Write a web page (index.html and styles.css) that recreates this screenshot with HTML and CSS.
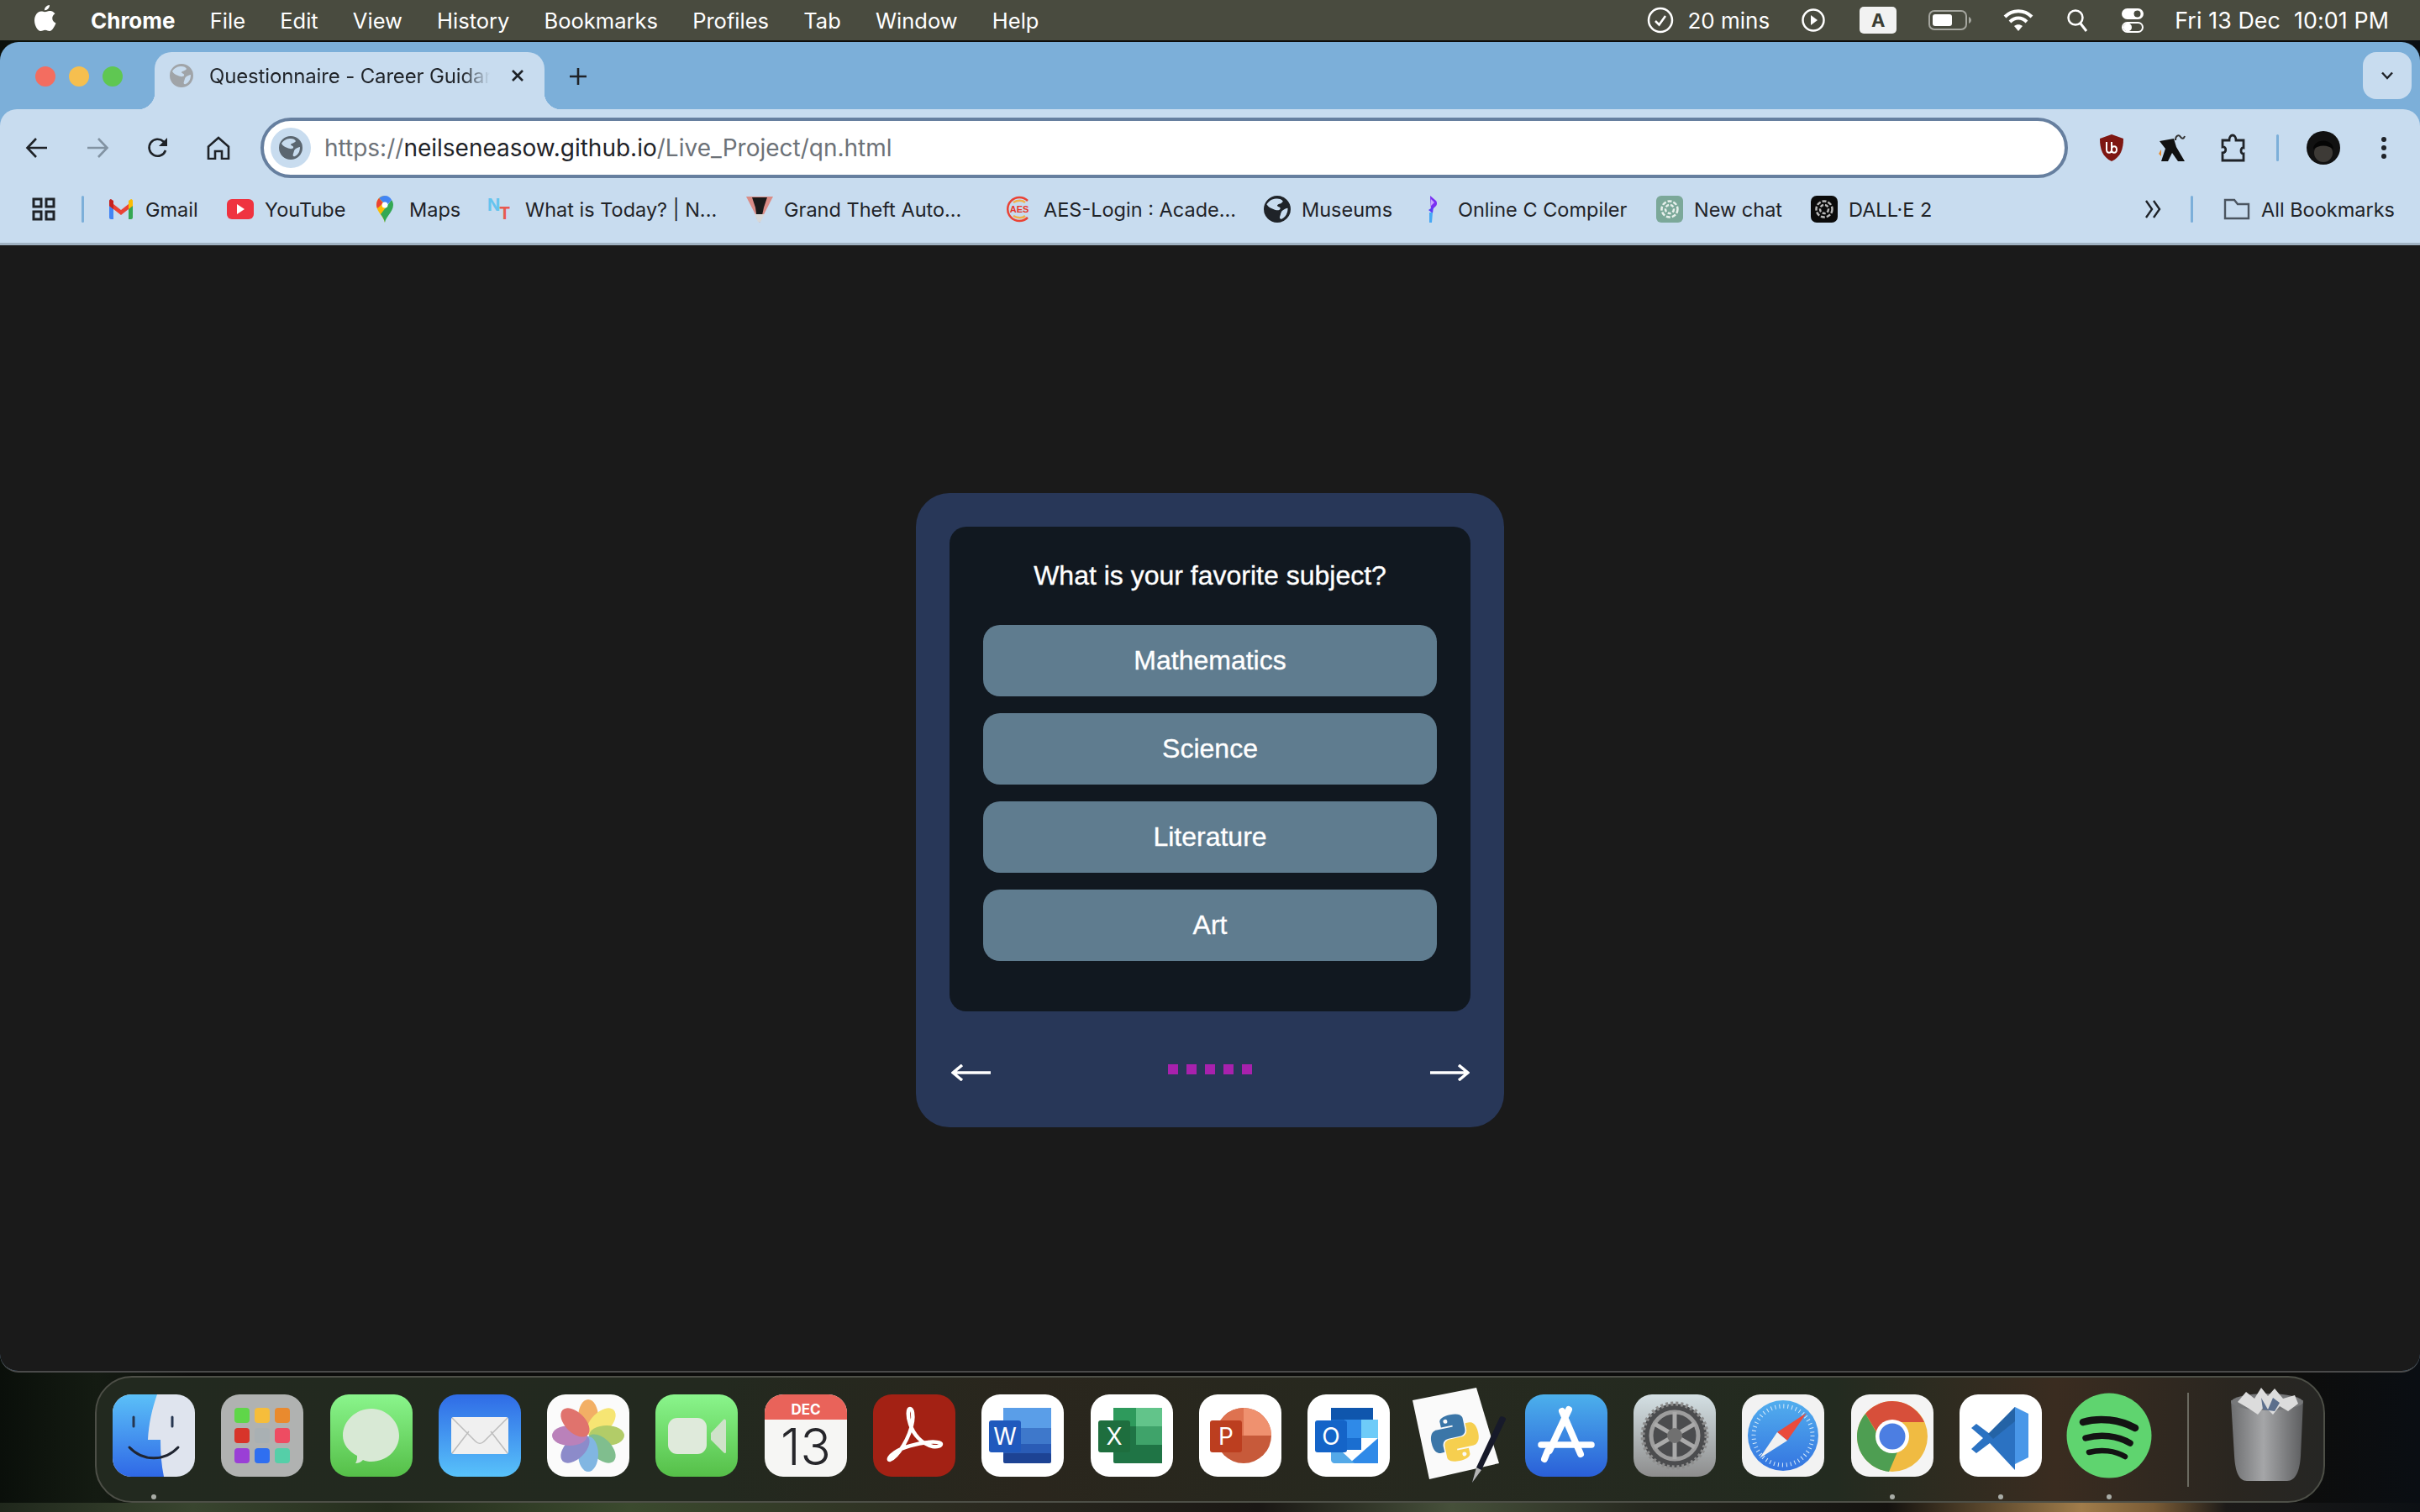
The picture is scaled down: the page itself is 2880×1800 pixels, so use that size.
FILE: index.html
```html
<!DOCTYPE html>
<html lang="en">
<head>
<meta charset="utf-8">
<title>Questionnaire - Career Guidance</title>
<link rel="stylesheet" href="styles.css">
</head>
<body>
<svg class="defs" width="0" height="0">
  <defs>
    <symbol id="globe" viewBox="0 0 28 28"><path fill-rule="evenodd" d="M14 0a14 14 0 1 0 0 28a14 14 0 1 0 0-28zM3 9C6 4 10 3 14 3c3 0 5 1 6 3-2 3-5 2-6 4 0 2 4 1 3 4-1 2-5 1-7 0-3-1-5-2-7-5zM25 13c0 5-2 9-6 11-2 1-3-1-2-3 1-3 1-5 3-6 2-1 3-2 5-2z"/></symbol>
    <linearGradient id="gFinder" x1="0" y1="0" x2="0" y2="1"><stop offset="0" stop-color="#5bc0f8"/><stop offset="1" stop-color="#2f68e6"/></linearGradient>
    <linearGradient id="gMsg" x1="0" y1="0" x2="0" y2="1"><stop offset="0" stop-color="#8af58c"/><stop offset="1" stop-color="#55bf48"/></linearGradient>
    <linearGradient id="gMail" x1="0" y1="0" x2="0" y2="1"><stop offset="0" stop-color="#2f6be6"/><stop offset="1" stop-color="#58c2fa"/></linearGradient>
    <linearGradient id="gStore" x1="0" y1="0" x2="0" y2="1"><stop offset="0" stop-color="#4cb0ec"/><stop offset="1" stop-color="#2a5fd8"/></linearGradient>
    <linearGradient id="gGear" x1="0" y1="0" x2="0" y2="1"><stop offset="0" stop-color="#d4e0e4"/><stop offset="1" stop-color="#8d8d8d"/></linearGradient>
    <linearGradient id="gSaf" x1="0" y1="0" x2="0" y2="1"><stop offset="0" stop-color="#52aeee"/><stop offset="1" stop-color="#3474e0"/></linearGradient>
    <linearGradient id="gTrash" x1="0" y1="0" x2="1" y2="0"><stop offset="0" stop-color="#6d6e70"/><stop offset=".45" stop-color="#a5a6a8"/><stop offset="1" stop-color="#5d5e60"/></linearGradient>
    <clipPath id="cIcon"><rect width="98" height="98" rx="22"/></clipPath>
  </defs>
</svg>

<header class="menubar">
  <div class="menu-left">
    <svg class="apple" viewBox="0 0 26 32"><path fill="#fff" d="M18 0c.3 3-2.700 6.500-6 6.200C11.600 3 15 .2 18 0zM12.300 8.200c1.500 0 3.200-1.300 5.700-1.300 1.500 0 4.700.5 6.500 3.400-4.800 3-4 9.300 1 11.300-1.300 3.600-4.300 9.400-7.500 9.400-2 0-2.800-1.300-5.200-1.300-2.500 0-3.400 1.300-5.300 1.300C3.500 31 0 24 0 18.500 0 12 4 7.500 8 7.500c1.800 0 3.200.7 4.300.7z"/></svg>
    <span class="menu-item menu-app">Chrome</span>
    <span class="menu-item">File</span>
    <span class="menu-item">Edit</span>
    <span class="menu-item">View</span>
    <span class="menu-item">History</span>
    <span class="menu-item">Bookmarks</span>
    <span class="menu-item">Profiles</span>
    <span class="menu-item">Tab</span>
    <span class="menu-item">Window</span>
    <span class="menu-item">Help</span>
  </div>
  <div class="menu-right">
    <svg class="st st-clock" viewBox="0 0 32 32"><circle cx="16" cy="16" r="14" fill="none" stroke="#fff" stroke-width="2.500"/><path d="M10 17l4.500 4.500L22 11" fill="none" stroke="#fff" stroke-width="2.500"/></svg>
    <span class="st-text st-mins">20 mins</span>
    <svg class="st st-play" viewBox="0 0 28 32"><circle cx="14" cy="16" r="12.500" fill="none" stroke="#fff" stroke-width="2.500"/><path d="M11 10l8 6-8 6z" fill="#fff"/></svg>
    <span class="st-a">A</span>
    <svg class="st st-batt" viewBox="0 0 52 28"><rect x="1" y="3" width="44" height="22" rx="6" fill="none" stroke="#a5a69f" stroke-width="2"/><rect x="5" y="7" width="23" height="14" rx="3" fill="#fff"/><path d="M48 10c2 1 3 2.500 3 4s-1 3-3 4z" fill="#a5a69f"/></svg>
    <svg class="st st-wifi" viewBox="0 0 36 28"><path d="M2 10C11 1 25 1 34 10" fill="none" stroke="#fff" stroke-width="4"/><path d="M8 16c6-6 14-6 20 0" fill="none" stroke="#fff" stroke-width="4"/><path d="M18 27l-5-6c3-2.500 7-2.500 10 0z" fill="#fff"/></svg>
    <svg class="st st-search" viewBox="0 0 26 30"><circle cx="11" cy="12" r="8.500" fill="none" stroke="#fff" stroke-width="2.500"/><path d="M17 19l7 9" stroke="#fff" stroke-width="3"/></svg>
    <svg class="st st-ctrl" viewBox="0 0 28 30"><rect x="1" y="1" width="26" height="13" rx="6.500" fill="#fff"/><circle cx="19.500" cy="7.500" r="4" fill="#494b3f"/><rect x="1" y="17" width="26" height="13" rx="6.500" fill="#fff"/><rect x="3" y="19" width="22" height="9" rx="4.500" fill="#494b3f"/><circle cx="8" cy="23.500" r="5" fill="#fff"/></svg>
    <span class="st-text st-date">Fri 13 Dec</span>
    <span class="st-text st-time">10:01 PM</span>
  </div>
</header>

<main class="window">
  <div class="tabstrip">
    <div class="lights">
      <span class="light light-red"></span>
      <span class="light light-yellow"></span>
      <span class="light light-green"></span>
    </div>
    <div class="tab">
      <svg class="tab-fav"><use href="#globe"/></svg>
      <span class="tab-title">Questionnaire - Career Guidance</span>
      <svg class="tab-close" viewBox="0 0 16 16"><path d="M2 2l12 12M14 2L2 14" stroke="#1f2328" stroke-width="2.600"/></svg>
    </div>
    <svg class="tab-new" viewBox="0 0 22 22"><path d="M11 1v20M1 11h20" stroke="#1f2328" stroke-width="2.600"/></svg>
    <div class="tab-search"><svg viewBox="0 0 16 10"><path d="M2 1.500l6 6.500 6-6.500" fill="none" stroke="#1f2328" stroke-width="2.400"/></svg></div>
  </div>

  <div class="toolbar">
    <svg class="tool" viewBox="0 0 28 28"><path d="M26 14H3M13 3L2.500 14 13 25" fill="none" stroke="#1f2328" stroke-width="2.600"/></svg>
    <svg class="tool" viewBox="0 0 28 28"><path d="M2 14h23M15 3l10.500 11L15 25" fill="none" stroke="#8293a3" stroke-width="2.600"/></svg>
    <svg class="tool" viewBox="0 0 28 28"><path d="M23 17a10 10 0 1 1-2.500-10.500L24 10" fill="none" stroke="#1f2328" stroke-width="2.600"/><path d="M25 2v10H15z" fill="#1f2328"/></svg>
    <svg class="tool" viewBox="0 0 28 28"><path d="M14 2L2 12.500V27h8v-9h8v9h8V12.500z" fill="none" stroke="#1f2328" stroke-width="2.600"/></svg>
    <div class="omnibox">
      <span class="omni-chip"><svg class="omni-globe"><use href="#globe"/></svg></span>
      <span class="url"><span class="url-dim">https://</span>neilseneasow.github.io<span class="url-dim">/Live_Project/qn.html</span></span>
    </div>
    <svg class="ext ext-ub" viewBox="0 0 30 34"><path d="M15 1l14 5c0 12-3 22-14 27C4 28 1 18 1 6z" fill="#7e1712"/><path d="M9 10v9c0 5 6 5 6 0v-9M15 19c0 5 6 5 6 0s-6-5-6 0" fill="none" stroke="#fff" stroke-width="2"/></svg>
    <svg class="ext ext-bag" viewBox="0 0 36 36"><path d="M3 10l17-3 3 10 10 17h-8l-7-10-5 10H5l5-15z" fill="#111"/><path d="M5 20L2 25l3 3z" fill="#e88b2d"/><path d="M22 9c0-6 4-7 6-4s4 2 5-1" fill="none" stroke="#333" stroke-width="2"/></svg>
    <svg class="ext ext-puzzle" viewBox="0 0 32 34"><path d="M3 8h8c0-8 8-8 8 0h9v9c-4-1-4 8 0 7v8H3v-9c5 0 5-8 0-7z" fill="none" stroke="#1f2328" stroke-width="2.800"/></svg>
    <span class="tool-div"></span>
    <svg class="avatar" viewBox="0 0 40 40"><circle cx="20" cy="20" r="20" fill="#111"/><circle cx="20" cy="26" r="11" fill="#3d3a36"/><path d="M8 22c0-14 24-14 24 0-6-6-18-6-24 0z" fill="#050505"/></svg>
    <svg class="kebab" viewBox="0 0 8 28"><circle cx="4" cy="4" r="3"/><circle cx="4" cy="14" r="3"/><circle cx="4" cy="24" r="3"/></svg>
  </div>

  <nav class="bookmarks">
    <svg class="bm-apps" viewBox="0 0 28 28"><path d="M2 2h9v9H2zM17 2h9v9h-9zM2 17h9v9H2zM17 17h9v9h-9z" fill="none" stroke="#1f2328" stroke-width="3"/></svg>
    <span class="bm-div"></span>
    <a class="bm bm-gmail">
      <svg class="fav" viewBox="0 0 32 32"><path d="M2 6h5v22H4c-1 0-2-1-2-2z" fill="#4285f4"/><path d="M25 6h5v20c0 1-1 2-2 2h-3z" fill="#34a853"/><path d="M2 6l14 11L30 6v6L16 23 2 12z" fill="#ea4335"/><path d="M25 6l3-2c1 0 2 1 2 2v6l-5 4z" fill="#fbbc04"/><path d="M2 6c0-1 1-2 2-2l3 2v10l-5-4z" fill="#c5221f"/></svg>
      <span>Gmail</span>
    </a>
    <a class="bm bm-yt">
      <svg class="fav" viewBox="0 0 32 32"><rect y="4" width="32" height="24" rx="6" fill="#ef3340"/><path d="M12 10l9 6-9 6z" fill="#fff"/></svg>
      <span>YouTube</span>
    </a>
    <a class="bm bm-maps">
      <svg class="fav" viewBox="0 0 32 32"><path d="M16 32c-1-7-10-13-10-21a10 10 0 0 1 10-11v10z" fill="#fbbc04"/><path d="M16 32c1-7 10-13 10-21 0-2-.5-4-2-6L11 22c3 4 4.500 7 5 10z" fill="#34a853"/><path d="M9 3c2-2 4.500-3 7-3 4 0 6.500 2 8 5l-6 7z" fill="#4285f4"/><path d="M6 11c0-3 1-6 3-8l5 6-7 6c-.500-1-1-3-1-4z" fill="#ea4335"/><circle cx="16" cy="11" r="3.500" fill="#fff"/></svg>
      <span>Maps</span>
    </a>
    <a class="bm bm-nt">
      <svg class="fav" viewBox="0 0 32 32"><text x="0" y="18" class="nt-n">N</text><text x="14" y="28" class="nt-t">T</text></svg>
      <span>What is Today? | N...</span>
    </a>
    <a class="bm bm-gta">
      <svg class="fav" viewBox="0 0 32 32"><path d="M0 1h32L16 32z" fill="#d98c86"/><path d="M7 2h18l-4 12-3 14h-5l-2-14z" fill="#1a1a1a"/><path d="M10 22h12l-5 9h-3z" fill="#d8d8d8"/></svg>
      <span>Grand Theft Auto...</span>
    </a>
    <a class="bm bm-aes">
      <svg class="fav" viewBox="0 0 32 32"><path d="M26 6A14 14 0 1 0 26 26" fill="none" stroke="#ea4335" stroke-width="2.500"/><path d="M9 8c5-3 11-3 14 0M9 24c5 3 11 3 14 0" fill="none" stroke="#f2b04b" stroke-width="2.500"/><text x="16" y="20" class="aes-t">AES</text></svg>
      <span>AES-Login : Acade...</span>
    </a>
    <a class="bm bm-mus">
      <svg class="fav fav-globe"><use href="#globe"/></svg>
      <span>Museums</span>
    </a>
    <a class="bm bm-c">
      <svg class="fav" viewBox="0 0 32 32"><path d="M12 0l7 6c2 3 1 6-2 8l-4 4z" fill="#7a2ff2"/><path d="M13 4l4 4-4 4z" fill="#c9a5ff"/><path d="M10 17l6-4-1 8z" fill="#5b3df5"/><path d="M11 20h4l-1 12h-3z" fill="#46a8f5"/></svg>
      <span>Online C Compiler</span>
    </a>
    <a class="bm bm-chat">
      <svg class="fav" viewBox="0 0 32 32"><rect width="32" height="32" rx="6" fill="#7ba899"/><circle cx="16" cy="16" r="9.500" fill="none" stroke="#e8f0ec" stroke-width="2.500" stroke-dasharray="5 2"/><circle cx="16" cy="16" r="5" fill="none" stroke="#e8f0ec" stroke-width="2.500" stroke-dasharray="4 2"/></svg>
      <span>New chat</span>
    </a>
    <a class="bm bm-dalle">
      <svg class="fav" viewBox="0 0 32 32"><rect width="32" height="32" rx="7" fill="#0b0b0b"/><circle cx="16" cy="16" r="9.500" fill="none" stroke="#b8b8b8" stroke-width="2.500" stroke-dasharray="5 2"/><circle cx="16" cy="16" r="5" fill="none" stroke="#b8b8b8" stroke-width="2.500" stroke-dasharray="4 2"/></svg>
      <span>DALL·E 2</span>
    </a>
    <svg class="bm-more" viewBox="0 0 22 24"><path d="M3 2l7 10-7 10M12 2l7 10-7 10" fill="none" stroke="#1f2328" stroke-width="2.400"/></svg>
    <span class="bm-div bm-div-right"></span>
    <a class="bm bm-all">
      <svg class="fav" viewBox="0 0 32 32"><path d="M2 5h11l4 5h13v17H2z" fill="none" stroke="#4b5560" stroke-width="2.400"/></svg>
      <span>All Bookmarks</span>
    </a>
  </nav>

  <section class="page">
    <div class="card">
      <div class="panel">
        <h2 class="question">What is your favorite subject?</h2>
        <button class="answer">Mathematics</button>
        <button class="answer">Science</button>
        <button class="answer">Literature</button>
        <button class="answer">Art</button>
      </div>
      <div class="card-nav">
        <svg class="nav-arrow" viewBox="0 0 48 20"><path d="M47 10H3M13 1L2 10l11 9" fill="none" stroke="#fff" stroke-width="3.500"/></svg>
        <div class="steps"><span class="step"></span><span class="step"></span><span class="step"></span><span class="step"></span><span class="step"></span></div>
        <svg class="nav-arrow" viewBox="0 0 48 20"><path d="M1 10h44M35 1l11 9-11 9" fill="none" stroke="#fff" stroke-width="3.500"/></svg>
      </div>
    </div>
  </section>
</main>

<footer class="dock">
  <div class="dock-item running">
    <svg viewBox="0 0 98 98"><g clip-path="url(#cIcon)"><rect width="98" height="98" fill="#dfe4ee"/><path d="M0 0h53c-6 17-10 35-11 54h15c0 15 1 30 4 44H0z" fill="url(#gFinder)"/><path d="M25 27v11M71 27v11" stroke="#263650" stroke-width="3" stroke-linecap="round"/><path d="M20 63c16 17 42 17 58 0" fill="none" stroke="#1f2430" stroke-width="3" stroke-linecap="round"/></g></svg>
  </div>
  <div class="dock-item">
    <svg viewBox="0 0 98 98"><rect width="98" height="98" rx="22" fill="#b0b2b1"/>
      <rect x="16" y="16" width="18" height="18" rx="4" fill="#5fd649"/><rect x="40" y="16" width="18" height="18" rx="4" fill="#f6bd3b"/><rect x="64" y="16" width="18" height="18" rx="4" fill="#e98a2e"/>
      <rect x="16" y="40" width="18" height="18" rx="4" fill="#d8342a"/><rect x="40" y="40" width="18" height="18" rx="4" fill="#a9b0b3"/><rect x="64" y="40" width="18" height="18" rx="4" fill="#ee4c62"/>
      <rect x="16" y="64" width="18" height="18" rx="4" fill="#9a3fd6"/><rect x="40" y="64" width="18" height="18" rx="4" fill="#2f6ff0"/><rect x="64" y="64" width="18" height="18" rx="4" fill="#55cfa8"/>
    </svg>
  </div>
  <div class="dock-item"><svg viewBox="0 0 98 98"><rect width="98" height="98" rx="22" fill="url(#gMsg)"/><path d="M49 17c18 0 33 15 33 32S67 80 49 80c-4 0-7-.500-10-2-3 3-6 4-9 4 2-3 2-6 2-9-10-5-17-14-17-24 0-17 15-32 34-32z" fill="#d8e9d5"/></svg></div>
  <div class="dock-item"><svg viewBox="0 0 98 98"><rect width="98" height="98" rx="22" fill="url(#gMail)"/><rect x="15" y="27" width="68" height="44" rx="3" fill="#f0f0f0"/><path d="M16 28l28 28c3 3 7 3 10 0l28-28M16 70l20-26M82 70L62 44" fill="none" stroke="#bdbdbd" stroke-width="1.500"/></svg></div>
  <div class="dock-item"><svg viewBox="0 0 98 98"><rect width="98" height="98" rx="22" fill="#fbfbfb"/><g opacity=".78"><ellipse cx="49" cy="27" rx="12" ry="21" fill="#f09a3c"/><ellipse cx="49" cy="27" rx="12" ry="21" fill="#f5df4d" transform="rotate(45 49 49)"/><ellipse cx="49" cy="27" rx="12" ry="21" fill="#9ebf3f" transform="rotate(90 49 49)"/><ellipse cx="49" cy="27" rx="12" ry="21" fill="#5eae70" transform="rotate(135 49 49)"/><ellipse cx="49" cy="27" rx="12" ry="21" fill="#5fa3dc" transform="rotate(180 49 49)"/><ellipse cx="49" cy="27" rx="12" ry="21" fill="#6e6cbd" transform="rotate(225 49 49)"/><ellipse cx="49" cy="27" rx="12" ry="21" fill="#a860a8" transform="rotate(270 49 49)"/><ellipse cx="49" cy="27" rx="12" ry="21" fill="#d94d46" transform="rotate(315 49 49)"/></g></svg></div>
  <div class="dock-item"><svg viewBox="0 0 98 98"><rect width="98" height="98" rx="22" fill="url(#gMsg)"/><rect x="15" y="28" width="46" height="43" rx="11" fill="#dfeadb"/><path d="M66 46l15-16c2-1 3 0 3 2v36c0 2-1 3-3 1L66 54z" fill="#cfe2c9"/></svg></div>
  <div class="dock-item"><svg viewBox="0 0 98 98"><g clip-path="url(#cIcon)"><rect width="98" height="98" fill="#f6f6f4"/><rect width="98" height="30" fill="#e9635a"/><text x="49" y="24" class="cal-m">DEC</text><text x="49" y="84" class="cal-d">13</text></g></svg></div>
  <div class="dock-item"><svg viewBox="0 0 98 98"><rect width="98" height="98" rx="22" fill="#a32114"/><path d="M20 78c10-4 24-27 27-46 1-7 0-15-3-15s-3 9 0 18c4 13 14 24 27 27 6 1 10-1 10-3s-8-3-16-2c-12 1-30 6-39 12-6 4-9 9-6 9z" fill="none" stroke="#fff" stroke-width="4.500"/></svg></div>
  <div class="dock-item"><svg viewBox="0 0 98 98"><rect width="98" height="98" rx="22" fill="#fff"/><rect x="26" y="16" width="57" height="24" fill="#5a9ee8"/><rect x="26" y="40" width="57" height="19" fill="#3e78cb"/><rect x="26" y="59" width="57" height="19" fill="#2a5cb6"/><rect x="26" y="70" width="57" height="12" rx="2" fill="#1d4394"/><rect x="9" y="31" width="38" height="38" rx="3" fill="#2059bd"/><text x="28" y="60" class="ms-l">W</text></svg></div>
  <div class="dock-item"><svg viewBox="0 0 98 98"><rect width="98" height="98" rx="22" fill="#fff"/><rect x="27" y="16" width="58" height="66" rx="2" fill="#1f7445"/><rect x="54" y="16" width="31" height="22" fill="#62c48a"/><rect x="54" y="38" width="31" height="22" fill="#3fa36a"/><rect x="54" y="60" width="31" height="22" fill="#1f7445"/><rect x="27" y="16" width="27" height="22" fill="#2e9a5c"/><rect x="9" y="31" width="38" height="38" rx="3" fill="#1e6e3e"/><text x="28" y="60" class="ms-l">X</text></svg></div>
  <div class="dock-item"><svg viewBox="0 0 98 98"><rect width="98" height="98" rx="22" fill="#fff"/><circle cx="53" cy="49" r="33" fill="#c75a3a"/><path d="M53 16a33 33 0 0 1 33 33H53z" fill="#ef916f"/><path d="M53 16a33 33 0 0 0-33 33h33z" fill="#de7250"/><rect x="13" y="31" width="38" height="38" rx="3" fill="#bc3e1f"/><text x="32" y="60" class="ms-l">P</text></svg></div>
  <div class="dock-item"><svg viewBox="0 0 98 98"><rect width="98" height="98" rx="22" fill="#fff"/><rect x="28" y="16" width="50" height="16" fill="#0f56ad"/><rect x="44" y="30" width="20" height="22" fill="#2f8ae8"/><rect x="64" y="30" width="20" height="22" fill="#6ecbf8"/><rect x="28" y="30" width="16" height="22" fill="#1a6ed0"/><rect x="44" y="52" width="20" height="14" fill="#1a6ed0"/><path d="M84 52L50 82h34z" fill="#2f8ae8"/><path d="M28 56l28 26H32c-2 0-4-2-4-4z" fill="#54a9e8"/><rect x="9" y="31" width="38" height="38" rx="3" fill="#1464c8"/><text x="28" y="60" class="ms-l">O</text></svg></div>
  <div class="dock-item"><svg viewBox="0 0 98 98">
    <path d="M-5 7L71-8 98 82 15 101z" fill="#fafafa"/>
    <g transform="translate(44 45) rotate(-12) scale(.52) translate(-55 -42)">
      <path fill="#3b76a8" fill-rule="evenodd" d="M54.900 1C27 1 28.700 13.100 28.700 13.100v12.500h26.600v3.800H18.100S.3 27.400.3 55.500s15.600 27.100 15.600 27.100h9.300V69.600s-.5-15.600 15.300-15.600h26.400s14.800.2 14.800-14.300V15.600S84 1 54.900 1zM40.300 9.400a4.800 4.800 0 1 1 0 9.500 4.800 4.800 0 0 1 0-9.500z"/>
      <path fill="#f6cf4f" fill-rule="evenodd" d="M55.100 109C83 109 81.300 96.900 81.300 96.900V84.400H54.700v-3.800h37.200s17.800 2 17.800-26.100-15.600-27.100-15.600-27.100h-9.300v13s.5 15.600-15.300 15.600H43.100s-14.800-.2-14.800 14.300v24.100S26 109 55.100 109zM69.700 100.600a4.800 4.800 0 1 1 0-9.500 4.800 4.800 0 0 1 0 9.500z"/>
    </g>
    <path d="M66 105l5-18 28-60c1-2 8 0 7 3L77 90z" fill="#171a2a"/><path d="M66 105l5-18 6 3z" fill="#b5b5b5"/>
  </svg></div>
  <div class="dock-item"><svg viewBox="0 0 98 98"><rect width="98" height="98" rx="22" fill="url(#gStore)"/><path d="M29 67L52 18M66 71L44 20" stroke="#fff" stroke-width="8" stroke-linecap="round"/><path d="M19 60h60" stroke="#fff" stroke-width="7.500" stroke-linecap="round"/><path d="M23 77l4-10" stroke="#fff" stroke-width="8" stroke-linecap="round"/></svg></div>
  <div class="dock-item"><svg viewBox="0 0 98 98"><rect width="98" height="98" rx="22" fill="url(#gGear)"/><circle cx="49" cy="49" r="38" fill="#4b4c4e"/><circle cx="49" cy="49" r="38" fill="none" stroke="#8c8c8c" stroke-width="5" stroke-dasharray="3 3"/><circle cx="49" cy="49" r="28" fill="none" stroke="#9d9d9d" stroke-width="5"/><path d="M49 21v56M25 35l48 28M73 35L25 63" stroke="#aaa" stroke-width="5"/><circle cx="49" cy="49" r="9" fill="#707070"/></svg></div>
  <div class="dock-item"><svg viewBox="0 0 98 98"><rect width="98" height="98" rx="22" fill="#f2f2f2"/><circle cx="49" cy="49" r="42" fill="url(#gSaf)"/><circle cx="49" cy="49" r="35" fill="none" stroke="#d8ebfa" stroke-width="5" stroke-dasharray="1 4"/><path d="M77 22L42 45l12 10z" fill="#ea4b3c"/><path d="M21 76l21-31 12 10z" fill="#f1f1f1"/></svg></div>
  <div class="dock-item running"><svg viewBox="0 0 98 98"><rect width="98" height="98" rx="22" fill="#f4f4f4"/><circle cx="49" cy="50" r="42" fill="#f0bb42"/><path d="M49 8c17 0 31 10 38 25H49c-9 0-16 6-18 13L17 23C25 14 36 8 49 8z" fill="#d74f3a"/><path d="M17 23l20 34c4 6 12 10 20 7L45 92C26 90 7 74 7 50c0-10 4-20 10-27z" fill="#4e9e52"/><circle cx="49" cy="50" r="20" fill="#fff"/><circle cx="49" cy="50" r="15.500" fill="#4c7ee2"/></svg></div>
  <div class="dock-item running"><svg viewBox="0 0 98 98"><rect width="98" height="98" rx="22" fill="#fff"/><path d="M66 15L36 47 20 35l-6 5 14 12-14 13 6 5 16-12 30 32z" fill="#2b72c2"/><path d="M66 15L34 47l6 6 26-21z" fill="#2463a6"/><path d="M66 15l16 8v52l-16 8z" fill="#4997e8"/></svg></div>
  <div class="dock-item running"><svg viewBox="0 0 98 98"><circle cx="49" cy="49" r="50.500" fill="#5fd46f"/><path d="M18 33c20-6 44-3 62 7" fill="none" stroke="#131313" stroke-width="8.500" stroke-linecap="round"/><path d="M21 52c18-5 38-3 53 6" fill="none" stroke="#131313" stroke-width="7.500" stroke-linecap="round"/><path d="M25 69c15-4 31-2 43 5" fill="none" stroke="#131313" stroke-width="6.500" stroke-linecap="round"/></svg></div>
  <span class="dock-sep"></span>
  <div class="dock-item dock-trash"><svg viewBox="0 0 86 114"><path d="M0 16L4 82c1 18 5 30 15 30h48c10 0 15-12 16-30l3-66z" fill="url(#gTrash)" transform="translate(0 -1)"/><ellipse cx="43" cy="17" rx="43" ry="10" fill="#77787a"/><path d="M8 17L18 5l10 8L36 0l8 10L52 1l10 12 14-4 4 10-12 9-10-6-8 10-10-10-8 10-12-8z" fill="#dcdcdc"/><path d="M36 12l8 14 6-14 8 6-6 10-14-2z" fill="#5c6f8c"/></svg></div>
</footer>
</body>
</html>
```
FILE: styles.css
```css
* { box-sizing: border-box; }
html, body { margin: 0; padding: 0; }
body {
  width: 2880px;
  height: 1800px;
  overflow: hidden;
  display: flex;
  flex-direction: column;
  font-family: "Inter", "Liberation Sans", sans-serif;
  background:
    linear-gradient(90deg, #20281c 0, #39452f 8%, #242c1c 16%, #3b4a2e 26%, #2b2a20 40%, #1a1714 52%, #46503a 60%, #26281f 68%, #14120f 78%, #a07c4a 86%, #7a5c36 89%, #1c1a18 92%, #0c1014 100%) bottom / 100% 11px no-repeat,
    linear-gradient(90deg, #0a0f0a 0, #141b12 4%, #0d0d0c 8%, #0d0d0c 95%, #0a0e13 100%);
}
.defs { position: absolute; }

/* macOS menu bar */
.menubar {
  height: 48px;
  flex: none;
  background: #494b3f;
  color: #fff;
  display: flex;
  justify-content: space-between;
  align-items: center;
  padding-left: 41px;
  padding-right: 37px;
  font-size: 25.500px;
}
.menu-left, .menu-right { display: flex; align-items: center; }
.apple { width: 26px; height: 32px; margin-right: 41px; margin-top: -4px; }
.menu-item { margin-right: 41.200px; }
.menu-app { font-weight: 700; font-size: 26px; }
.st { flex: none; }
.st-text { white-space: nowrap; font-size: 26.800px; letter-spacing: .1px; }
.st-clock { width: 32px; height: 32px; margin-right: 16px; }
.st-mins { margin-right: 38px; font-size: 26px; letter-spacing: 0; }
.st-play { width: 28px; height: 32px; margin-right: 41px; }
.st-a {
  width: 44px; height: 32px; border-radius: 5px; background: #f2f2f2; color: #3b3d33;
  font-size: 22px; font-weight: 700; display: flex; align-items: center; justify-content: center; margin-right: 38px;
}
.st-batt { width: 52px; height: 28px; margin-right: 37px; }
.st-wifi { width: 36px; height: 28px; margin-right: 39px; }
.st-search { width: 26px; height: 30px; margin-right: 39px; }
.st-ctrl { width: 28px; height: 30px; margin-right: 36px; }
.st-date { margin-right: 16px; }

/* Browser window */
.window {
  flex: none;
  margin-top: 2px;
  height: 1584px;
  border-radius: 22px;
  background: #7cafd9;
  display: flex;
  flex-direction: column;
  overflow: hidden;
  border-bottom: 2px solid #4a4a4a;
}
.tabstrip {
  height: 80px;
  flex: none;
  display: flex;
  align-items: flex-end;
  position: relative;
}
.lights { align-self: flex-start; display: flex; gap: 16px; padding: 29px 0 0 42px; width: 184px; }
.light { width: 24px; height: 24px; border-radius: 50%; }
.light-red { background: #f36d60; }
.light-yellow { background: #f6bf4f; }
.light-green { background: #5fc752; }
.tab {
  width: 464px; height: 68px;
  background: #c8dcef;
  border-radius: 20px 20px 0 0;
  position: relative;
  display: flex;
  align-items: center;
  padding: 0 0 12px 18px;
}
.tab::before, .tab::after {
  content: ""; position: absolute; bottom: 0; width: 20px; height: 20px;
}
.tab::before { left: -20px; background: radial-gradient(circle at 0 0, transparent 20px, #c8dcef 20.500px); }
.tab::after { right: -20px; background: radial-gradient(circle at 100% 0, transparent 20px, #c8dcef 20.500px); }
.tab-fav { width: 28px; height: 28px; fill: #a0a4a8; flex: none; }
.tab-title {
  margin-left: 19px; width: 334px; flex: none; overflow: hidden; white-space: nowrap;
  font-size: 24px; color: #1f2328; letter-spacing: -.15px;
  mask-image: linear-gradient(90deg, #000 90%, transparent 100%);
}
.tab-close { width: 16px; height: 16px; margin-left: 25px; flex: none; }
.tab-new { width: 22px; height: 22px; margin: 0 0 28px 29px; flex: none; }
.tab-search {
  position: absolute; right: 10px; top: 12px; width: 58px; height: 56px; border-radius: 16px;
  background: #c8dcef; display: flex; align-items: center; justify-content: center;
}
.tab-search svg { width: 16px; height: 10px; }

.toolbar {
  height: 82px;
  flex: none;
  background: #c8dcef;
  border-radius: 20px 20px 0 0;
  display: flex;
  align-items: center;
  padding: 10px 0 0 30px;
}
.tool { width: 28px; height: 28px; margin-right: 44px; flex: none; }
.omnibox {
  width: 2151px; height: 72px; margin-left: -8px; flex: none;
  background: #fff; border: 4px solid #667f9f; border-radius: 36px;
  display: flex; align-items: center; padding-left: 8px;
}
.omni-chip { width: 48px; height: 48px; border-radius: 50%; background: #c8dcef; display: flex; align-items: center; justify-content: center; flex: none; }
.omni-globe { width: 28px; height: 28px; fill: #5b6670; }
.url { margin-left: 16px; font-size: 28px; color: #1f2328; white-space: nowrap; }
.url-dim { color: #6d7278; }
.ext { flex: none; }
.ext-ub { width: 30px; height: 34px; margin-left: 37px; }
.ext-bag { width: 36px; height: 36px; margin-left: 39px; }
.ext-puzzle { width: 32px; height: 34px; margin-left: 39px; }
.tool-div { width: 3px; height: 32px; background: #7cafd9; margin-left: 35px; border-radius: 2px; flex: none; }
.avatar { width: 40px; height: 40px; margin-left: 33px; flex: none; }
.kebab { width: 8px; height: 28px; margin-left: 48px; fill: #1f2328; flex: none; }

.bookmarks {
  height: 80px;
  flex: none;
  background: #c8dcef;
  border-bottom: 3px solid #a0b2c2;
  display: flex;
  align-items: center;
  padding: 0 0 3px 38px;
  font-size: 23.500px;
  color: #1f2328;
}
.bm-apps { width: 28px; height: 28px; flex: none; }
.bm-div { width: 3px; height: 32px; background: #7cafd9; border-radius: 2px; margin: 0 28px 0 31px; flex: none; }
.bm { display: flex; align-items: center; gap: 13px; white-space: nowrap; flex: none; }
.fav { width: 32px; height: 32px; flex: none; overflow: visible; }
.fav-globe { fill: #1f2328; }
.bm-gmail { width: 142px; }
.bm-yt { width: 172px; }
.bm-maps { width: 138px; }
.bm-nt { width: 308px; }
.bm-gta { width: 309px; }
.bm-aes { width: 307px; }
.bm-mus { width: 186px; }
.bm-c { width: 281px; }
.bm-chat { width: 184px; }
.bm-dalle { width: 396px; }
.bm-more { width: 22px; height: 24px; flex: none; }
.bm-div-right { margin: 0 36px 0 34px; }
.nt-n { font: 700 20px "Inter", sans-serif; fill: #64c4ee; }
.nt-t { font: 700 20px "Inter", sans-serif; fill: #e8594f; }
.aes-t { font: 700 11px "Liberation Sans", sans-serif; fill: #e8352a; text-anchor: middle; }

/* Page content */
.page {
  flex: 1;
  background: #1a1a1a;
  display: flex;
  align-items: center;
  justify-content: center;
  padding-top: 5px;
  font-family: "Liberation Sans", Arial, sans-serif;
}
.card {
  width: 700px;
  height: 755px;
  background: #283758;
  border-radius: 40px;
  padding: 40px;
}
.panel {
  background: #111820;
  border-radius: 20px;
  padding: 40px;
  height: 577px;
  display: flex;
  flex-direction: column;
  gap: 20px;
}
.question {
  margin: 0 0 20px;
  font-size: 32px;
  font-weight: 400;
  line-height: 37px;
  color: #fff;
  text-align: center;
  -webkit-text-stroke: .35px #fff;
}
.answer {
  height: 85px;
  border: 0;
  border-radius: 20px;
  background: #5f7c8f;
  color: #fff;
  font-family: inherit;
  font-size: 32px;
  flex: none;
  -webkit-text-stroke: .35px #fff;
}
.card-nav {
  display: flex;
  justify-content: space-between;
  align-items: center;
  margin-top: 60px;
  padding: 0 1.500px;
  height: 26px;
}
.nav-arrow { width: 48px; height: 20px; }
.steps { display: flex; gap: 10px; margin-top: -8px; }
.step { width: 12px; height: 12px; background: #a821ad; }

/* Dock */
.dock {
  flex: none;
  width: 2654px;
  height: 151px;
  margin: 4px 0 0 113px;
  border: 2px solid #4d4f47;
  border-radius: 44px;
  background: linear-gradient(90deg, #22291f 0, #23291f 28%, #2a261d 42%, #26291f 60%, #232b20 78%, #3a2c20 88%, #2a2620 96%, #262624 100%);
  display: flex;
  gap: 31.300px;
  padding: 20px 0 0 19px;
}
.dock-item { width: 98px; height: 98px; flex: none; position: relative; }
.dock-item svg { width: 100%; height: 100%; display: block; overflow: visible; }
.running::after {
  content: ""; position: absolute; left: 46px; top: 119px; width: 6px; height: 6px; border-radius: 50%; background: #a8aca6;
}
.dock-sep { width: 2px; height: 112px; background: #6b6a60; margin: -2px 0 0 12px; flex: none; }
.dock-trash { width: 86px; height: 114px; margin-top: -8px; margin-left: 19px; }
.cal-m { font: 700 17px "Inter", sans-serif; fill: #fff; text-anchor: middle; }
.cal-d { font: 300 60px "Inter", sans-serif; fill: #26262a; text-anchor: middle; }
.ms-l { font: 400 28px "Inter", sans-serif; fill: #fff; text-anchor: middle; }
```
